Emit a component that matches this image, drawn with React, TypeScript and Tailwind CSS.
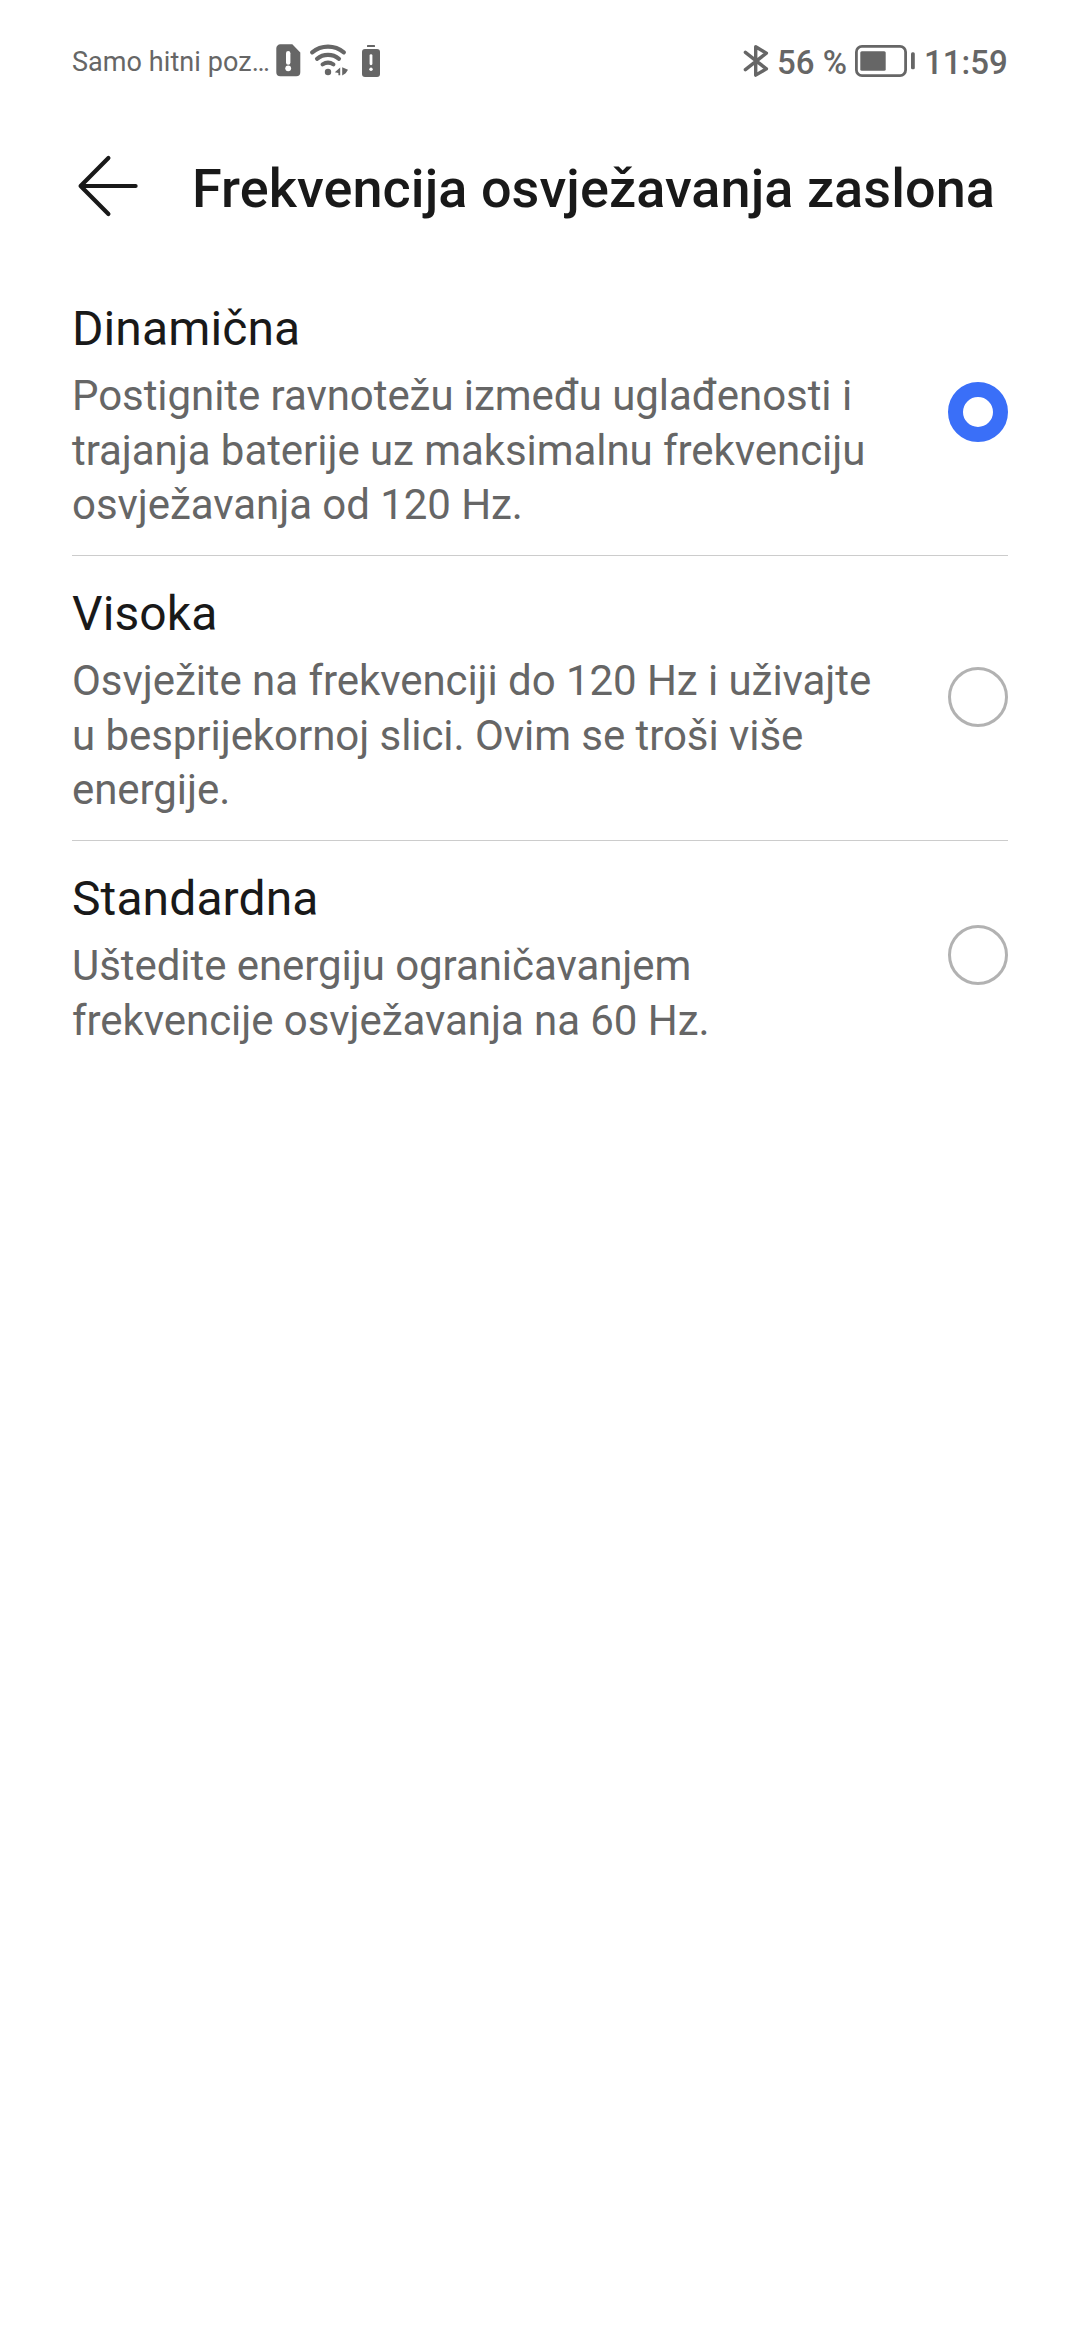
import { useState } from 'react';

const options = [
  {
    title: 'Dinamična',
    lines: [
      'Postignite ravnotežu između uglađenosti i',
      'trajanja baterije uz maksimalnu frekvenciju',
      'osvježavanja od 120 Hz.',
    ],
  },
  {
    title: 'Visoka',
    lines: [
      'Osvježite na frekvenciji do 120 Hz i uživajte',
      'u besprijekornoj slici. Ovim se troši više',
      'energije.',
    ],
  },
  {
    title: 'Standardna',
    lines: ['Uštedite energiju ograničavanjem', 'frekvencije osvježavanja na 60 Hz.'],
  },
];

const SimAlertIcon = () => (
  <svg width="25" height="34" viewBox="0 0 25 34" className="shrink-0">
    <path d="M4.5 1.3h11.8L24.3 9.5v19.8a4 4 0 0 1-4 4H4.3a4 4 0 0 1-4-4V5.3a4 4 0 0 1 4.2-4z" fill="#666666" />
    <path d="M12.2 10.3v9.2" stroke="#fff" strokeWidth="4.4" strokeLinecap="round" />
    <circle cx="12.2" cy="25.3" r="2.9" fill="#fff" />
  </svg>
);

const WifiIcon = () => (
  <svg width="40" height="34" viewBox="0 0 40 34" className="shrink-0">
    <g fill="none" stroke="#666666" strokeWidth="4.1" strokeLinecap="round">
      <path d="M2.2 9.4a24.5 24.5 0 0 1 31.6 0" />
      <path d="M7 15.8a17.5 17.5 0 0 1 22 0" />
      <path d="M12.6 21.4a9.8 9.8 0 0 1 10.8 0" />
    </g>
    <circle cx="18" cy="29" r="3.2" fill="#666666" />
    <path d="M24.8 29.3l5.4-4.9v7.8h-1.8v-2.1z M32.2 24.2l5.8 2.6-2.3 3.4-3.5 2.4z" fill="#666666" />
  </svg>
);

const LowBatteryIcon = () => (
  <svg width="18" height="34" viewBox="0 0 18 34" className="shrink-0">
    <rect x="5" y="2" width="8" height="2" rx="0.5" fill="#666666" />
    <rect x="0" y="6" width="18" height="28" rx="3" fill="#666666" />
    <path d="M9 12.6v8.2" stroke="#fff" strokeWidth="2.8" strokeLinecap="round" />
    <circle cx="9" cy="26.2" r="1.7" fill="#fff" />
  </svg>
);

const BluetoothIcon = () => (
  <svg width="26" height="34" viewBox="0 0 26 34" className="shrink-0">
    <path
      d="M2.4 9.3l21 16.6-10.7 6.2V3.7l10.7 6.4-21 16.6"
      fill="none"
      stroke="#666666"
      strokeWidth="3.4"
      strokeLinecap="round"
      strokeLinejoin="round"
    />
  </svg>
);

const BatteryIcon = () => (
  <svg width="60" height="34" viewBox="0 0 60 34" className="shrink-0">
    <rect x="1.4" y="3.4" width="49.2" height="29.2" rx="5.6" fill="none" stroke="#666666" strokeWidth="2.8" />
    <rect x="5.3" y="8.2" width="25.4" height="19.6" rx="1.5" fill="#666666" />
    <rect x="56" y="9.3" width="3.8" height="17" rx="1.5" fill="#666666" />
  </svg>
);

const StatusBar = () => (
  <div className="flex h-[124px] items-center justify-between px-[72px] leading-[40px] whitespace-nowrap text-[#666666]">
    <div className="flex items-center">
      <span className="w-[204px] text-[27px] tracking-[0.07px]">Samo hitni poz…</span>
      <div className="flex pb-[4px]">
        <SimAlertIcon />
        <div className="ml-[9px] flex">
          <WifiIcon />
        </div>
        <div className="ml-[12px] flex">
          <LowBatteryIcon />
        </div>
      </div>
    </div>
    <div className="flex items-center text-[33px] font-medium">
      <div className="mr-[8px] pb-[4px]">
        <BluetoothIcon />
      </div>
      <span className="w-[78px] pt-[2px]">56 %</span>
      <div className="pb-[4px]">
        <BatteryIcon />
      </div>
      <span className="ml-[9px] w-[84px] pt-[2px]">11:59</span>
    </div>
  </div>
);

const App = () => {
  const [selected, setSelected] = useState(0);

  return (
    <div className="min-h-[2340px] bg-white font-['Roboto',sans-serif]">
      <StatusBar />
      <header className="flex h-[130px] items-center px-[72px]">
        <button className="mr-[48px] pb-[6px]">
          <svg width="72" height="72" viewBox="0 0 72 72">
            <path
              d="M36.4 8L8.6 36l27.8 28M8.6 36h55"
              fill="none"
              stroke="#191919"
              strokeWidth="4.2"
              strokeLinecap="round"
              strokeLinejoin="round"
            />
          </svg>
        </button>
        <h1 className="whitespace-nowrap text-[54px] leading-[64px] font-medium tracking-[0.06px] text-[#191919]">
          Frekvencija osvježavanja zaslona
        </h1>
      </header>

      <main className="px-[72px] pt-[17px]">
        {options.map((option, index) => (
          <div
            key={option.title}
            className="flex items-center justify-between border-b border-[#cccccc] last:border-b-0"
            onClick={() => setSelected(index)}
          >
            <div className="pt-[30px] pb-[22.2px]">
              <h2 className="text-[48px] leading-[56px] tracking-[0.1px] text-[#191919]">{option.title}</h2>
              <div className="mt-[12px] text-[42px] leading-[54.6px] tracking-[-0.06px] text-[#666666]">
                {option.lines.map((line) => (
                  <div key={line} className="whitespace-nowrap">
                    {line}
                  </div>
                ))}
              </div>
            </div>
            <div
              className={
                selected === index
                  ? 'mb-[2px] size-[60px] rounded-full border-[15px] border-[#3a6ff8]'
                  : 'mb-[2px] size-[60px] rounded-full border-[3px] border-[#b2b2b2]'
              }
            />
          </div>
        ))}
      </main>
    </div>
  );
};

export default App;
